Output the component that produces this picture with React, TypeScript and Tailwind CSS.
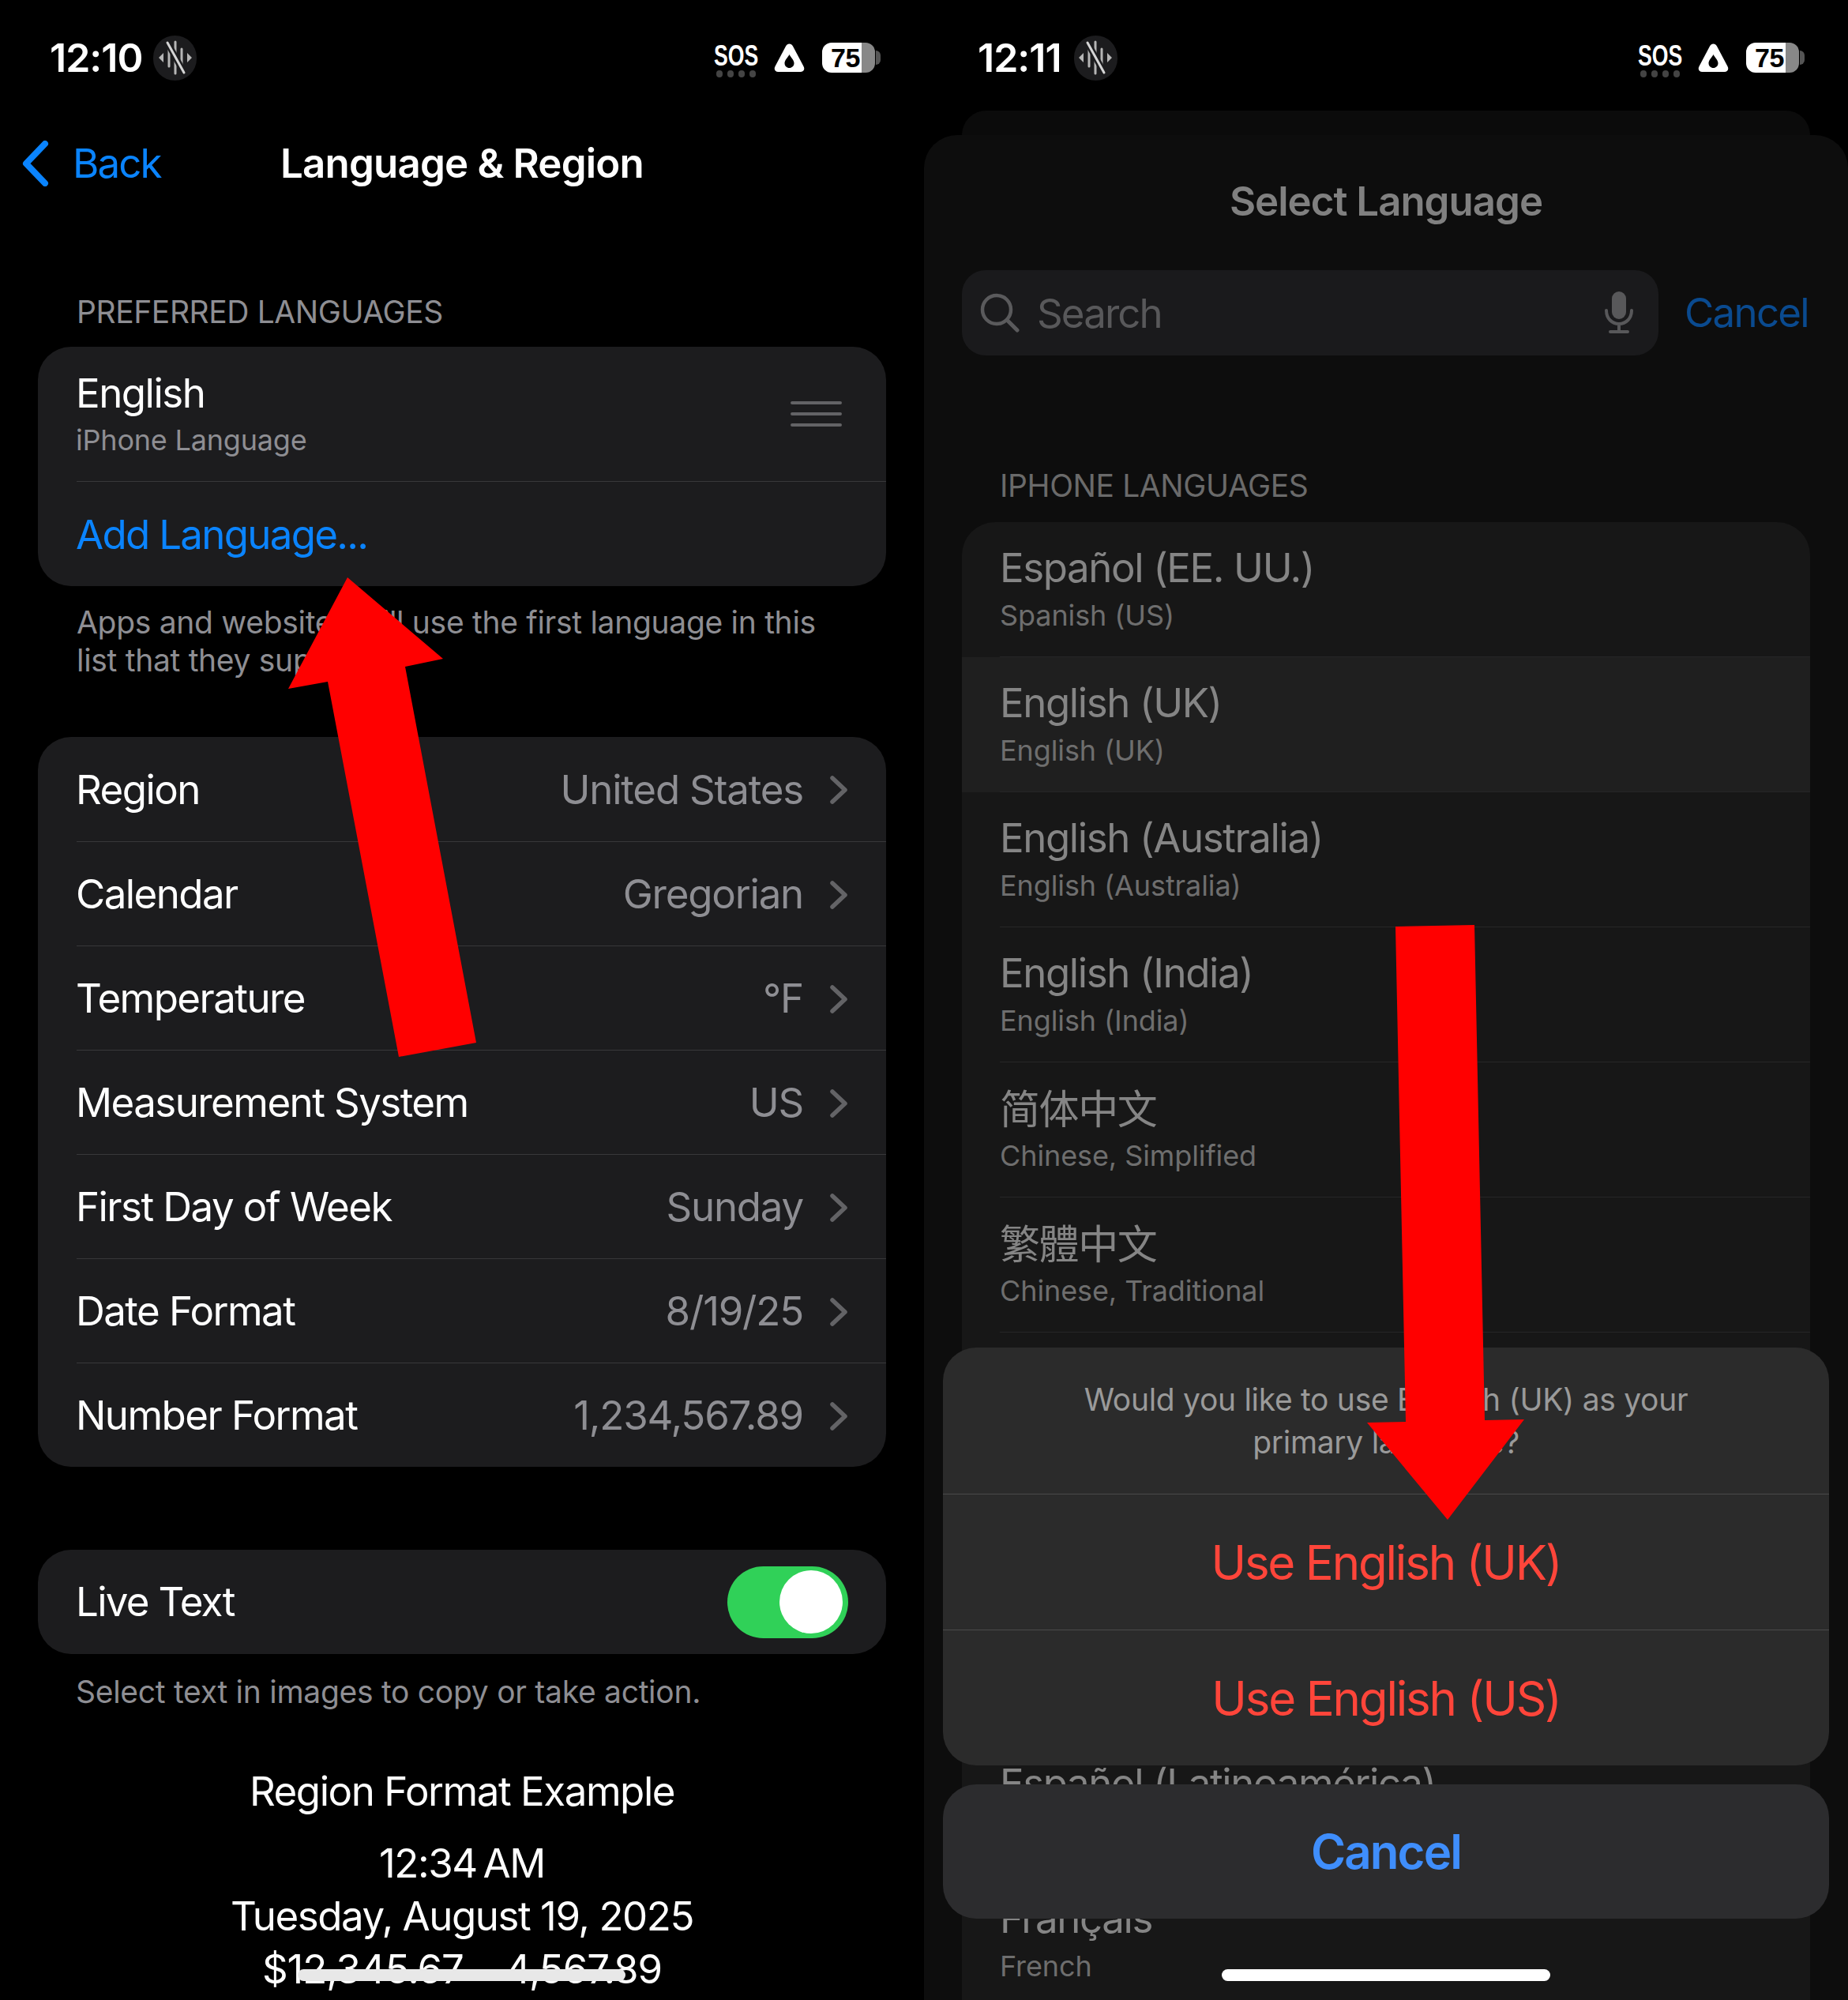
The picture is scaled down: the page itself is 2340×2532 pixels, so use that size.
import React from "react";

const sans = "font-['Inter','Noto_Sans_CJK_SC',sans-serif]";

function SoundOffBadge() {
  return (
    <div className="w-[55px] h-[57px] rounded-full bg-[#1c1c1e] flex items-center justify-center">
      <svg width="44" height="46" viewBox="0 0 44 46" fill="none">
        <path d="M1 23l6-6v12zM43 23l-6-6v12z" fill="#b5b5b5" />
        <path d="M22 3v40M14 12v22M30 12v22" stroke="#b5b5b5" strokeWidth="3" strokeLinecap="round" />
        <path d="M12 4l21 38" stroke="#1c1c1e" strokeWidth="8" />
        <path d="M12 4l21 38" stroke="#d5d5d5" strokeWidth="3" strokeLinecap="round" />
      </svg>
    </div>
  );
}

function StatusBar({ time, timeClass }: { time: string; timeClass: string }) {
  return (
    <div className="h-[140px] shrink-0 pt-[6px] pr-[55px] flex items-center justify-between">
      <div className={`flex items-center ${timeClass}`}>
        <span className={`${sans} text-[50px] font-semibold text-white tracking-[-1px] leading-none`}>{time}</span>
        <SoundOffBadge />
      </div>
      <div className="flex items-center">
        <div className="w-[54px] pt-[8px] flex flex-col items-center">
          <span className="font-['Liberation_Sans',sans-serif] font-bold text-[37px] leading-[28px] text-white scale-x-[0.72]">
            SOS
          </span>
          <div className="flex gap-[6px] mt-[4px]">
            <div className="w-[8px] h-[9px] rounded-full bg-[#444]" />
            <div className="w-[8px] h-[9px] rounded-full bg-[#444]" />
            <div className="w-[8px] h-[9px] rounded-full bg-[#444]" />
            <div className="w-[8px] h-[9px] rounded-full bg-[#444]" />
          </div>
        </div>
        <svg className="ml-[21px]" width="39" height="36" viewBox="0 0 39 36">
          <path
            fillRule="evenodd"
            fill="#fff"
            d="M15 3.5C17 -.5 22 -.5 24 3.5L37.5 29C39.5 32.5 37.5 36 33.5 36H5.5C1.5 36 -.5 32.5 1.5 29ZM19.5 14C17.5 18 13.5 21 13.5 25C13.5 28.5 16.2 31 19.5 31C22.8 31 25.5 28.5 25.5 25C25.5 21 21.5 18 19.5 14Z"
          />
        </svg>
        <div className="ml-[22px] relative w-[67px] h-[38px] flex">
          <div className="w-[50px] rounded-l-[12px] bg-white" />
          <div className="w-[17px] rounded-r-[12px] bg-[#888]" />
          <span className="absolute left-[11px] top-0 h-full flex items-center font-['Liberation_Sans',sans-serif] font-bold text-[34px] leading-none text-black tracking-[-0.5px]">
            75
          </span>
        </div>
        <div className="ml-[1px] w-[6px] h-[18px] rounded-r-full bg-[#555]" />
      </div>
    </div>
  );
}

function Chevron() {
  return (
    <svg className="ml-[34px]" width="22" height="36" viewBox="0 0 22 36" fill="none">
      <path d="M3 3l16 15L3 33" stroke="#636366" strokeWidth="5.5" strokeLinecap="round" strokeLinejoin="round" />
    </svg>
  );
}

const regionRows = [
  { label: "Region", value: "United States" },
  { label: "Calendar", value: "Gregorian" },
  { label: "Temperature", value: "°F" },
  { label: "Measurement System", value: "US" },
  { label: "First Day of Week", value: "Sunday" },
  { label: "Date Format", value: "8/19/25" },
  { label: "Number Format", value: "1,234,567.89" },
];

function LanguagePage() {
  return (
    <div className={`${sans} relative w-[1170px] h-[2532px] overflow-hidden bg-black text-white`}>
      <StatusBar time="12:10" timeClass="pl-[63px] gap-[14px]" />

      {/* Nav */}
      <div className="relative mt-[6px] h-[122px] flex items-center justify-center">
        <div className="absolute left-[28px] top-0 h-full flex items-center">
          <svg width="34" height="58" viewBox="0 0 34 58" fill="none">
            <path d="M29 4L5 29l24 25" stroke="#0a84ff" strokeWidth="8" strokeLinecap="round" strokeLinejoin="round" />
          </svg>
          <span className="ml-[30px] text-[51px] text-[#0a84ff] tracking-[-1.9px]">Back</span>
        </div>
        <h1 className="text-[51px] font-semibold tracking-[-0.8px]">Language &amp; Region</h1>
      </div>

      <div className="px-[48px]">
        <p className="mt-[104px] pl-[49px] text-[39px] leading-[46px] text-[#8e8e93] tracking-[-0.4px]">PREFERRED LANGUAGES</p>

        <div className="mt-[21px] rounded-[42px] bg-[#1c1c1e]">
          <div className="h-[170px] pl-[48px] pr-[56px] flex items-center justify-between">
            <div>
              <p className="text-[51px] leading-[62px] tracking-[-1.5px]">English</p>
              <p className="text-[36px] leading-[48px] mt-[4px] text-[#8e8e93] tracking-[-0.2px]">iPhone Language</p>
            </div>
            <div className="flex flex-col gap-[10px]">
              <div className="w-[65px] h-[4px] rounded-full bg-[#636366]" />
              <div className="w-[65px] h-[4px] rounded-full bg-[#636366]" />
              <div className="w-[65px] h-[4px] rounded-full bg-[#636366]" />
            </div>
          </div>
          <div className="ml-[49px] h-px bg-[#38383a]" />
          <div className="h-[132px] pl-[48px] pt-[2px] flex items-center text-[51px] text-[#0a84ff] tracking-[-1.7px]">Add Language...</div>
        </div>

        <p className="mt-[22px] pl-[49px] text-[39px] leading-[48px] text-[#8e8e93] tracking-[-0.3px]">
          Apps and websites will use the first language in this
          <br />
          list that they support.
        </p>

        <div className="mt-[73px] rounded-[42px] bg-[#1c1c1e]">
          {regionRows.map((row, index) => (
            <div key={row.label} className="pl-[49px]">
              {index > 0 && <div className="h-px bg-[#38383a]" />}
              <div className={`${index > 0 ? "h-[131px]" : "h-[132px]"} pt-[2px] pr-[49px] flex items-center justify-between text-[51px]`}>
                <span className="-ml-px tracking-[-1.55px]">{row.label}</span>
                <span className="flex items-center text-[#8e8e93] tracking-[-1.2px]">
                  {row.value}
                  <Chevron />
                </span>
              </div>
            </div>
          ))}
        </div>

        <div className="mt-[105px] h-[132px] rounded-[42px] bg-[#1c1c1e] pl-[48px] pr-[48px] flex items-center justify-between">
          <span className="text-[51px] tracking-[-1.7px]">Live Text</span>
          <div className="w-[153px] h-[91px] rounded-full bg-[#30d158] flex items-center justify-end pr-[7px]">
            <div className="w-[80px] h-[80px] rounded-full bg-white" />
          </div>
        </div>

        <p className="mt-[24px] pl-[48px] text-[39px] leading-[48px] text-[#8e8e93] tracking-[-0.28px]">
          Select text in images to copy or take action.
        </p>
      </div>

      <div className="mt-[71px] flex flex-col items-center text-[51px] tracking-[-1.45px] whitespace-pre">
        <p className="leading-[62px]">Region Format Example</p>
        <p className="mt-[26px] leading-[67px]">12:34{"\u202f"}AM</p>
        <p className="leading-[67px]">Tuesday, August 19, 2025</p>
        <p className="leading-[67px] tracking-[-1.1px]">$12,345.67    4,567.89</p>
      </div>

      {/* Overlays */}
      <div className="absolute left-[377px] top-[2493px] w-[415px] h-[15px] rounded-full bg-[#e8e8e8]" />
      <svg className="absolute inset-0" width="1170" height="2532" viewBox="0 0 1170 2532">
        <polygon points="440,731 561,834 513,844 603,1320 505,1338 415,863 365,872" fill="#ff0000" />
      </svg>
    </div>
  );
}

const iphoneLanguages = [
  { title: "Español (EE. UU.)", sub: "Spanish (US)" },
  { title: "English (UK)", sub: "English (UK)", active: true },
  { title: "English (Australia)", sub: "English (Australia)" },
  { title: "English (India)", sub: "English (India)" },
  { title: "简体中文", sub: "Chinese, Simplified", lang: "font-['Noto_Sans_CJK_SC',sans-serif] -translate-y-[2px]" },
  { title: "繁體中文", sub: "Chinese, Traditional", lang: "font-['Noto_Sans_CJK_TC',sans-serif] -translate-y-[2px]" },
];

function LangRow({ title, sub, active, lang }: { title: string; sub: string; active?: boolean; lang?: string }) {
  return (
    <div className={`h-[171px] pl-[48px] pt-[27px] relative ${active ? "bg-[#1f1f1f]" : ""}`}>
      <p className={`text-[51px] leading-[62px] text-[#858585] tracking-[-1.4px] ${lang ?? ""}`}>{title}</p>
      <p className="mt-[5px] text-[36px] leading-[48px] text-[#6e6e6e] tracking-[-0.1px]">{sub}</p>
      <div className="absolute left-[48px] right-0 bottom-0 h-px bg-[#262627]" />
    </div>
  );
}

function SelectLanguagePage() {
  return (
    <div className={`${sans} relative w-[1170px] h-[2532px] overflow-hidden bg-black flex flex-col`}>
      <StatusBar time="12:11" timeClass="pl-[68px] gap-[16px]" />
      <div className="shrink-0 mx-[48px] h-[31px] rounded-t-[42px] bg-[#0b0b0b]" />

      <div className="flex-1 min-h-0 rounded-t-[42px] bg-[#0d0d0d]">
        <div className="h-[168px] flex items-center justify-center text-[51px] font-semibold text-[#808080] tracking-[-1px]">
          Select Language
        </div>

        <div className="mt-[3px] pl-[48px] pr-[50px] flex items-center justify-between">
          <div className="w-[882px] h-[108px] rounded-[30px] bg-[#1a1a1c] pl-[23px] pr-[32px] flex items-center">
            <svg width="50" height="50" viewBox="0 0 50 50" fill="none">
              <circle cx="21" cy="21" r="18" stroke="#5a5a5c" strokeWidth="4.5" />
              <path d="M34 34l13 13" stroke="#5a5a5c" strokeWidth="5" strokeLinecap="round" />
            </svg>
            <span className="ml-[22px] pt-[2px] flex-1 text-[51px] text-[#58585a] tracking-[-1.9px]">Search</span>
            <svg width="36" height="54" viewBox="0 0 36 54" fill="none">
              <rect x="9" y="0" width="18" height="35" rx="9" fill="#58585a" />
              <path d="M2 24c0 10 7 17 16 17s16-7 16-17M18 41v9M7 51h22" stroke="#58585a" strokeWidth="4" strokeLinecap="round" />
            </svg>
          </div>
          <span className="text-[51px] text-[#0a4a8f] tracking-[-1.7px]">Cancel</span>
        </div>

        <p className="mt-[142px] pl-[96px] text-[39px] leading-[46px] text-[#6a6a6a] tracking-[-0.4px]">IPHONE LANGUAGES</p>

        <div className="mt-[23px] mx-[48px] rounded-t-[42px] overflow-hidden bg-[#171717]">
          {iphoneLanguages.map((item) => (
            <LangRow key={item.title} {...item} />
          ))}
          {/* rows hidden behind the action sheet */}
          <div className="h-[513px]" />
          <LangRow title="Español (Latinoamérica)" sub="Spanish (Latin America)" />
          <LangRow title="Français" sub="French" />
        </div>
      </div>

      {/* Action sheet */}
      <div className="absolute left-[24px] top-[1706px] w-[1122px] rounded-[42px] bg-[#2b2b2b] text-center">
        <div className="h-[185px] flex items-center justify-center text-[39px] leading-[54px] text-[#9a9a9a] tracking-[-0.3px]">
          <p>
            Would you like to use English (UK) as your
            <br />
            primary language?
          </p>
        </div>
        <div className="h-[172px] flex items-center justify-center border-t border-[#4a4a4a] text-[60px] text-[#ff453a] tracking-[-2.2px]">
          Use English (UK)
        </div>
        <div className="h-[172px] flex items-center justify-center border-t border-[#4a4a4a] text-[60px] text-[#ff453a] tracking-[-2.2px]">
          Use English (US)
        </div>
      </div>
      <div className="absolute left-[24px] top-[2259px] w-[1122px] h-[170px] rounded-[42px] bg-[#2c2c2e] flex items-center justify-center text-[60px] font-semibold text-[#3f8efc] tracking-[-1.9px]">
        Cancel
      </div>

      <div className="absolute left-[377px] top-[2493px] w-[416px] h-[15px] rounded-full bg-white" />
      <svg className="absolute inset-0" width="1170" height="2532" viewBox="0 0 1170 2532">
        <polygon points="597,1173 697,1171 710,1798 760,1797 663,1924 561,1801 610,1800" fill="#ff0000" />
      </svg>
    </div>
  );
}

export default function App() {
  return (
    <div className="w-[2340px] h-[2532px] flex bg-black">
      <LanguagePage />
      <SelectLanguagePage />
    </div>
  );
}
